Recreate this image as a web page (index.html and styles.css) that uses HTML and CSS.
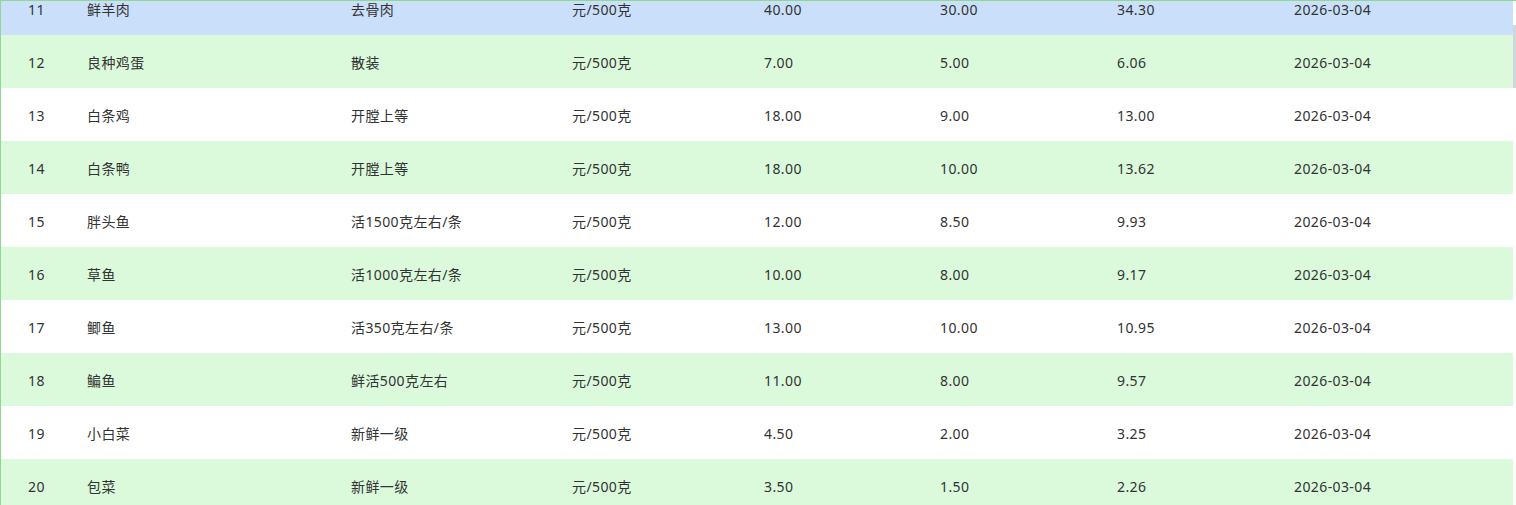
FILE: index.html
```html
<!DOCTYPE html>
<html lang="zh-CN">
<head>
<meta charset="utf-8">
<title>价格表</title>
<link rel="stylesheet" href="styles.css">
</head>
<body>
<div class="frame">
  <div class="viewport">
    <table class="price-table">
      <colgroup>
        <col class="c-no"><col class="c-name"><col class="c-spec"><col class="c-unit">
        <col class="c-max"><col class="c-min"><col class="c-avg"><col class="c-date">
      </colgroup>
      <tbody>
        <tr class="row-hover"><td>11</td><td>鲜羊肉</td><td>去骨肉</td><td>元/500克</td><td>40.00</td><td>30.00</td><td>34.30</td><td>2026-03-04</td></tr>
        <tr class="row-alt"><td>12</td><td>良种鸡蛋</td><td>散装</td><td>元/500克</td><td>7.00</td><td>5.00</td><td>6.06</td><td>2026-03-04</td></tr>
        <tr><td>13</td><td>白条鸡</td><td>开膛上等</td><td>元/500克</td><td>18.00</td><td>9.00</td><td>13.00</td><td>2026-03-04</td></tr>
        <tr class="row-alt"><td>14</td><td>白条鸭</td><td>开膛上等</td><td>元/500克</td><td>18.00</td><td>10.00</td><td>13.62</td><td>2026-03-04</td></tr>
        <tr><td>15</td><td>胖头鱼</td><td>活1500克左右/条</td><td>元/500克</td><td>12.00</td><td>8.50</td><td>9.93</td><td>2026-03-04</td></tr>
        <tr class="row-alt"><td>16</td><td>草鱼</td><td>活1000克左右/条</td><td>元/500克</td><td>10.00</td><td>8.00</td><td>9.17</td><td>2026-03-04</td></tr>
        <tr><td>17</td><td>鲫鱼</td><td>活350克左右/条</td><td>元/500克</td><td>13.00</td><td>10.00</td><td>10.95</td><td>2026-03-04</td></tr>
        <tr class="row-alt"><td>18</td><td>鳊鱼</td><td>鲜活500克左右</td><td>元/500克</td><td>11.00</td><td>8.00</td><td>9.57</td><td>2026-03-04</td></tr>
        <tr><td>19</td><td>小白菜</td><td>新鲜一级</td><td>元/500克</td><td>4.50</td><td>2.00</td><td>3.25</td><td>2026-03-04</td></tr>
        <tr class="row-alt"><td>20</td><td>包菜</td><td>新鲜一级</td><td>元/500克</td><td>3.50</td><td>1.50</td><td>2.26</td><td>2026-03-04</td></tr>
      </tbody>
    </table>
  </div>
  <div class="scrollbar"><div class="thumb"></div></div>
</div>
</body>
</html>
```
FILE: styles.css
```css
html, body {
  margin: 0;
  padding: 0;
  background: #ffffff;
}
body {
  font-family: "Noto Sans", "Noto Sans CJK SC", sans-serif;
  font-size: 14px;
  color: #333333;
}
.frame {
  display: flex;
  height: 505px;
  box-sizing: border-box;
  border-top: 1px solid #8fd88f;
  border-left: 1px solid #8fd88f;
  overflow: hidden;
}
.viewport {
  width: 1512px;
  overflow: hidden;
}
.price-table {
  width: 1512px;
  table-layout: fixed;
  border-collapse: collapse;
  margin-top: -19px;
}
.c-no { width: 86px; }
.c-name { width: 264px; }
.c-spec { width: 221px; }
.c-unit { width: 192px; }
.c-max { width: 176px; }
.c-min { width: 177px; }
.c-avg { width: 177px; }
.c-date { width: 219px; }
.price-table td {
  height: 53px;
  box-sizing: border-box;
  padding: 1px 0 0 0;
  vertical-align: middle;
  white-space: nowrap;
  letter-spacing: 0.4px;
}
.price-table td:first-child {
  padding-left: 27px;
}
.row-alt td {
  background: #dafadb;
}
.row-hover td {
  background: #c9dffa;
}
.scrollbar {
  width: 3px;
  flex: none;
}
.thumb {
  margin-top: 24px;
  height: 63px;
  background: #d2d5dc;
}
```
